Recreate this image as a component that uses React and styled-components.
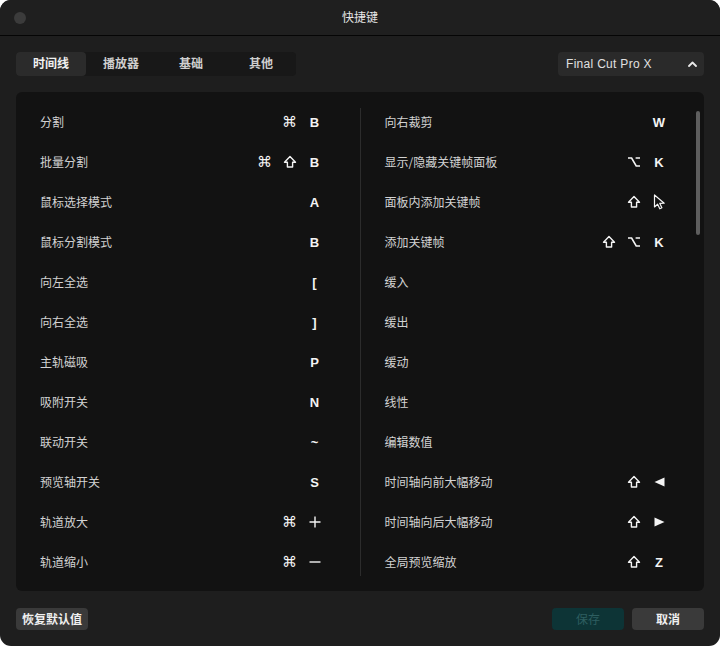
import styled, { createGlobalStyle } from 'styled-components'

const GlobalStyle = createGlobalStyle`
  html, body {
    margin: 0;
    padding: 0;
    background: #ffffff;
  }
  * {
    box-sizing: border-box;
  }
`

const FONT = `'Noto Sans CJK SC', 'Noto Sans', 'Liberation Sans', sans-serif`

const Window = styled.div`
  width: 720px;
  height: 646px;
  background: #1e1e1e;
  border-radius: 11px;
  overflow: hidden;
  display: flex;
  flex-direction: column;
  font-family: ${FONT};
  color: #d4d4d4;
`

const TitleBar = styled.div`
  height: 36px;
  flex-shrink: 0;
  position: relative;
  display: flex;
  align-items: center;
  justify-content: center;
  padding-bottom: 2px;
  border-bottom: 1px solid #050505;
  background: #1f1f1f;
  font-size: 12px;
  color: #e6e6e6;
`

const TrafficLight = styled.span`
  position: absolute;
  left: 14px;
  top: 12px;
  width: 12px;
  height: 12px;
  border-radius: 50%;
  background: #3b3b3b;
`

const Toolbar = styled.div`
  display: flex;
  justify-content: space-between;
  align-items: center;
  padding: 16px 16px 0;
`

const Tabs = styled.div`
  display: flex;
  background: #181818;
  border-radius: 4px;
  height: 24px;
`

const Tab = styled.div`
  width: 70px;
  display: flex;
  align-items: center;
  justify-content: center;
  padding-bottom: 3px;
  font-size: 12px;
  font-weight: 700;
  border-radius: 4px;
  color: ${(p) => (p.$active ? '#f0f0f0' : '#cfcfcf')};
  background: ${(p) => (p.$active ? '#2b2b2b' : 'transparent')};
`

const Select = styled.div`
  width: 146px;
  height: 24px;
  background: #2a2a2a;
  border-radius: 4px;
  display: flex;
  align-items: center;
  justify-content: space-between;
  padding: 0 7px 0 8px;
  font-family: 'Liberation Sans', 'Noto Sans', sans-serif;
  font-size: 12px;
  letter-spacing: 0.3px;
  color: #e0e0e0;
`

const Panel = styled.div`
  margin: 16px 16px 0;
  height: 499px;
  background: #121212;
  border-radius: 6px;
  display: flex;
  position: relative;
`

const Column = styled.div`
  flex: 1;
  padding: 10px 37px 0 24px;
  position: relative;
`

const Divider = styled.div`
  width: 1px;
  margin: 16px 0 15px;
  background: #2c2c2c;
`

const Scrollbar = styled.div`
  position: absolute;
  right: 4px;
  top: 19px;
  width: 4px;
  height: 124px;
  border-radius: 2px;
  background: #5e5e5e;
`

const Row = styled.div`
  height: 40px;
  display: flex;
  align-items: center;
  justify-content: space-between;
`

const Label = styled.span`
  font-size: 12px;
  color: #d2d2d2;
  padding-bottom: 1px;
`

const Keys = styled.div`
  display: flex;
  gap: 9px;
  align-items: center;
`

const Key = styled.span`
  width: 16px;
  height: 18px;
  display: flex;
  align-items: center;
  justify-content: center;
  font-family: ${(p) => (p.$glyph ? `'DejaVu Sans', sans-serif` : `'Liberation Sans', 'Noto Sans', sans-serif`)};
  font-size: ${(p) => (p.$glyph ? '15px' : '13px')};
  font-weight: ${(p) => (p.$glyph ? 400 : 700)};
  color: #f4f4f4;
`

const Footer = styled.div`
  display: flex;
  align-items: center;
  padding: 17px 16px 0;
  gap: 8px;
`

const Button = styled.div`
  width: 72px;
  height: 22px;
  border-radius: 4px;
  display: flex;
  align-items: center;
  justify-content: center;
  padding-bottom: 1px;
  font-size: 12px;
  background: ${(p) => (p.$primary ? '#0d3436' : '#3a3a3a')};
  color: ${(p) => (p.$primary ? '#2e5e60' : '#f0f0f0')};
  font-weight: ${(p) => (p.$primary ? 400 : 700)};
  margin-left: ${(p) => (p.$push ? 'auto' : '0')};
`

const ShiftIcon = () => (
  <svg width='14' height='14' viewBox='0 0 14 14'>
    <path
      d='M7 1.5 L12.5 7.2 H9.6 V12 H4.4 V7.2 H1.5 Z'
      fill='none'
      stroke='#f4f4f4'
      strokeWidth='1.4'
      strokeLinejoin='round'
    />
  </svg>
)

const OptionIcon = () => (
  <svg width='14' height='12' viewBox='0 0 14 12'>
    <path
      d='M1 2 H4.6 L9.2 10 H13 M8.6 2 H13'
      fill='none'
      stroke='#f4f4f4'
      strokeWidth='1.6'
    />
  </svg>
)

const CursorIcon = () => (
  <svg width='13' height='16' viewBox='0 0 13 16'>
    <path
      d='M1.5 1 V13 L4.6 10.2 L6.8 14.8 L8.9 13.8 L6.8 9.4 L11.2 9.2 Z'
      fill='none'
      stroke='#f4f4f4'
      strokeWidth='1.2'
      strokeLinejoin='round'
    />
  </svg>
)

const Triangle = ({ dir }) => (
  <svg width='11' height='10' viewBox='0 0 11 10'>
    <path d={dir === 'left' ? 'M0.5 5 L10.5 0.5 V9.5 Z' : 'M10.5 5 L0.5 0.5 V9.5 Z'} fill='#f4f4f4' />
  </svg>
)

const PlusIcon = () => (
  <svg width='12' height='12' viewBox='0 0 12 12'>
    <path d='M6 0.5 V11.5 M0.5 6 H11.5' stroke='#f4f4f4' strokeWidth='1.4' />
  </svg>
)

const MinusIcon = () => (
  <svg width='12' height='12' viewBox='0 0 12 12'>
    <path d='M0.5 6 H11.5' stroke='#f4f4f4' strokeWidth='1.4' />
  </svg>
)

const ChevronUp = () => (
  <svg width='9' height='6' viewBox='0 0 9 6'>
    <path d='M1 5 L4.5 1.5 L8 5' fill='none' stroke='#e8e8e8' strokeWidth='1.8' strokeLinecap='round' strokeLinejoin='round' />
  </svg>
)

const GLYPHS = {
  cmd: '⌘',
  shift: <ShiftIcon />,
  opt: <OptionIcon />,
  cursor: <CursorIcon />,
  left: <Triangle dir='left' />,
  right: <Triangle dir='right' />,
  plus: <PlusIcon />,
  minus: <MinusIcon />,
}

const leftRows = [
  ['分割', ['cmd', 'B']],
  ['批量分割', ['cmd', 'shift', 'B']],
  ['鼠标选择模式', ['A']],
  ['鼠标分割模式', ['B']],
  ['向左全选', ['[']],
  ['向右全选', [']']],
  ['主轨磁吸', ['P']],
  ['吸附开关', ['N']],
  ['联动开关', ['~']],
  ['预览轴开关', ['S']],
  ['轨道放大', ['cmd', 'plus']],
  ['轨道缩小', ['cmd', 'minus']],
]

const rightRows = [
  ['向右裁剪', ['W']],
  ['显示/隐藏关键帧面板', ['opt', 'K']],
  ['面板内添加关键帧', ['shift', 'cursor']],
  ['添加关键帧', ['shift', 'opt', 'K']],
  ['缓入', []],
  ['缓出', []],
  ['缓动', []],
  ['线性', []],
  ['编辑数值', []],
  ['时间轴向前大幅移动', ['shift', 'left']],
  ['时间轴向后大幅移动', ['shift', 'right']],
  ['全局预览缩放', ['shift', 'Z']],
]

const ShortcutRow = ({ label, keys }) => (
  <Row>
    <Label>{label}</Label>
    <Keys>
      {keys.map((k, i) => {
        const g = GLYPHS[k]
        return (
          <Key key={i} $glyph={!!g}>
            {g || k}
          </Key>
        )
      })}
    </Keys>
  </Row>
)

const tabs = ['时间线', '播放器', '基础', '其他']

export default function App() {
  return (
    <>
      <GlobalStyle />
      <Window>
        <TitleBar>
          <TrafficLight />
          快捷键
        </TitleBar>
        <Toolbar>
          <Tabs>
            {tabs.map((t, i) => (
              <Tab key={t} $active={i === 0}>
                {t}
              </Tab>
            ))}
          </Tabs>
          <Select>
            Final Cut Pro X
            <ChevronUp />
          </Select>
        </Toolbar>
        <Panel>
          <Column>
            {leftRows.map(([label, keys]) => (
              <ShortcutRow key={label} label={label} keys={keys} />
            ))}
          </Column>
          <Divider />
          <Column>
            {rightRows.map(([label, keys]) => (
              <ShortcutRow key={label} label={label} keys={keys} />
            ))}
          </Column>
          <Scrollbar />
        </Panel>
        <Footer>
          <Button>恢复默认值</Button>
          <Button $primary $push>
            保存
          </Button>
          <Button>取消</Button>
        </Footer>
      </Window>
    </>
  )
}
